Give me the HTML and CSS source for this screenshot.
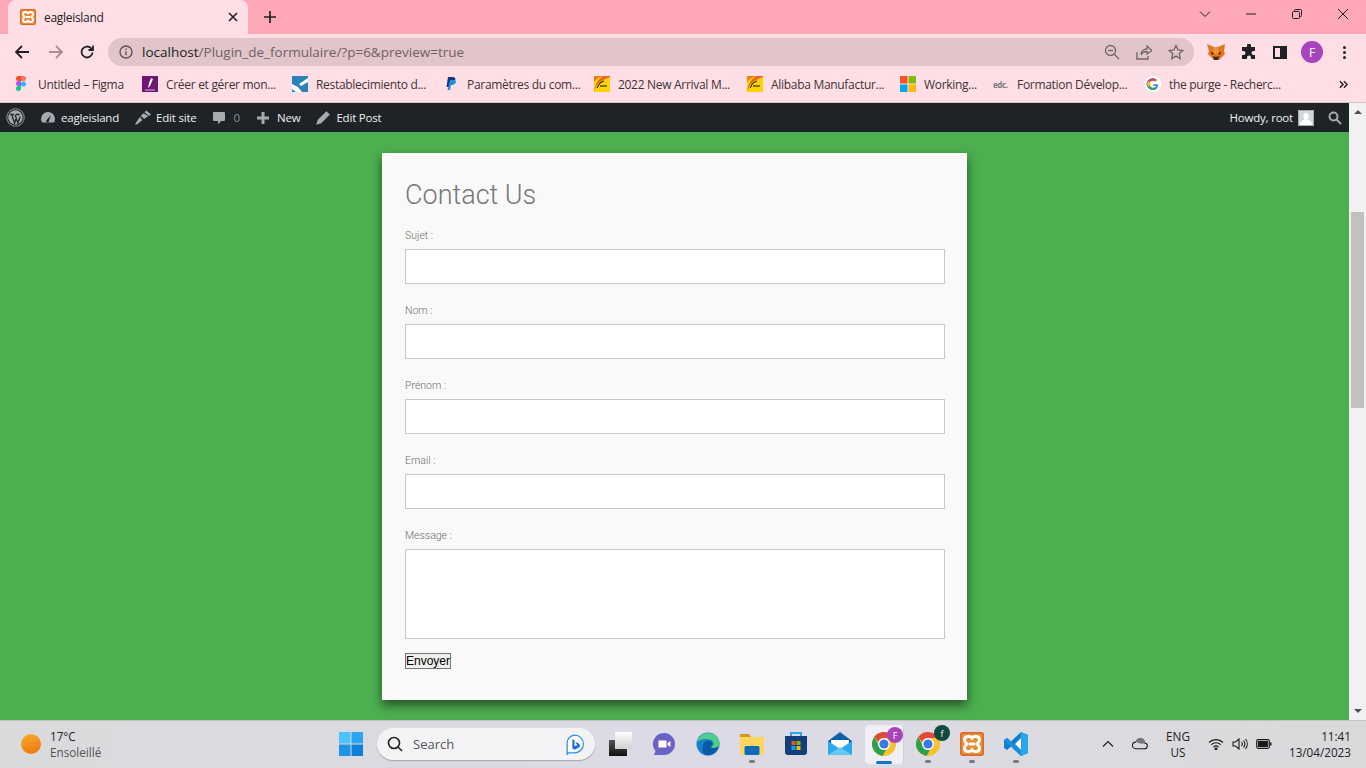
FILE: index.html
```html
<!DOCTYPE html>
<html lang="fr">

<head>
    <meta charset="UTF-8">
    <title>eagleisland</title>
    <link rel="stylesheet" href="styles.css">
</head>

<body>
    <svg class="defs" width="0" height="0">
        <symbol id="xampp" viewBox="0 0 24 24">
            <rect width="24" height="24" rx="3" fill="#d9691e" />
            <rect x="1.500" y="1.500" width="21" height="21" rx="2" fill="#ee8a35" />
            <path d="M4.500 8c0-4.500 5.500-4.500 7.500-1.800C14 3.500 19.500 3.500 19.500 8c0 2-1.500 3-2.500 4 1 1 2.500 2 2.500 4 0 4.500-5.500 4.500-7.500 1.800C10 20.500 4.500 20.500 4.500 16c0-2 1.500-3 2.500-4C6 11 4.500 10 4.500 8z" fill="none" stroke="#fff" stroke-width="3" />
            <path d="M9 12h6" stroke="#fff" stroke-width="3" />
        </symbol>
        <symbol id="chrome" viewBox="0 0 24 24">
            <circle cx="12" cy="12" r="12" fill="#fbc02d" />
            <path d="M12 0a12 12 0 0 1 10.400 6H12a6 6 0 0 0-5.700 4L2.300 4.900A12 12 0 0 1 12 0z" fill="#dc4b3e" />
            <path d="M2.300 4.900l4.900 9.500a6 6 0 0 0 6.900 3.200L10.600 23.900A12 12 0 0 1 2.300 4.900z" fill="#2e9e4f" />
            <circle cx="12" cy="12" r="6" fill="#fff" />
            <circle cx="12" cy="12" r="4.600" fill="#3b78e7" />
        </symbol>
        <symbol id="bolt" viewBox="0 0 16 16">
            <rect width="16" height="16" fill="#fdd400" />
            <path d="M0 16V6C3 2 7 0 12 0H0z" fill="#f07a1c" />
            <path d="M0 16C2 9 6 4 16 1V0H10C5 2 1 8 0 16z" fill="#e9632a" />
            <path d="M3 12l3-5 4-2M6 10h7" stroke="#111" stroke-width="1" fill="none" />
        </symbol>
        <linearGradient id="tv-light" x1="0" y1="0" x2="0" y2="1">
            <stop offset="0" stop-color="#fff" />
            <stop offset="1" stop-color="#cfcfcf" />
        </linearGradient>
        <linearGradient id="tv-dark" x1="0" y1="0" x2="0" y2="1">
            <stop offset="0" stop-color="#555" />
            <stop offset="1" stop-color="#111" />
        </linearGradient>
    </svg>

    <div class="screen">
        <header class="tabstrip">
            <div class="tab">
                <svg class="fav" viewBox="0 0 24 24"><use href="#xampp" /></svg>
                <span class="tab-title">eagleisland</span>
                <svg class="tab-close" viewBox="0 0 10 10"><path d="M1 1l8 8M9 1l-8 8" /></svg>
            </div>
            <svg class="new-tab" viewBox="0 0 12 12"><path d="M6 0v12M0 6h12" /></svg>
            <div class="win-controls">
                <span class="win-btn"><svg viewBox="0 0 12 12"><path d="M1 3.500l5 5 5-5" /></svg></span>
                <span class="win-btn"><svg viewBox="0 0 12 12"><path d="M1 6h10" /></svg></span>
                <span class="win-btn"><svg viewBox="0 0 12 12"><path d="M1.500 4.500a1 1 0 0 1 1-1h5a1 1 0 0 1 1 1v5a1 1 0 0 1-1 1h-5a1 1 0 0 1-1-1zM3.500 3.500v-1a1 1 0 0 1 1-1h5a1 1 0 0 1 1 1v5a1 1 0 0 1-1 1h-1" /></svg></span>
                <span class="win-btn"><svg viewBox="0 0 12 12"><path d="M1 1l10 10M11 1L1 11" /></svg></span>
            </div>
        </header>

        <div class="toolbar">
            <svg class="nav-icon" viewBox="0 0 16 16"><path d="M15 8H2M8 2L2 8l6 6" /></svg>
            <svg class="nav-icon nav-off" viewBox="0 0 16 16"><path d="M1 8h13M8 2l6 6-6 6" /></svg>
            <svg class="nav-icon" viewBox="0 0 16 16"><path d="M13.500 8.500a5.500 5.500 0 1 1-1.500-4.300L14 6M14 1.500V6H9.500" /></svg>
            <div class="omnibox">
                <svg class="info" viewBox="0 0 14 14"><circle cx="7" cy="7" r="6" /><path d="M7 6.200v4M7 3.500v1.400" /></svg>
                <span class="url"><b>localhost</b>/Plugin_de_formulaire/?p=6&amp;preview=true</span>
                <svg class="omni-icon" viewBox="0 0 16 16"><circle cx="6.500" cy="6.500" r="5" /><path d="M10.500 10.500L15 15M4 6.500h5" /></svg>
                <svg class="omni-icon" viewBox="0 0 16 16"><path d="M1 8v7h11v-3M5 11c0-4 3-6 6-6V2l5 4.500L11 10V7.500c-3 0-5 1-6 3.500z" /></svg>
                <svg class="omni-icon" viewBox="0 0 16 16"><path d="M8 1.500l2 4.500 4.800.5-3.600 3.200 1 4.800L8 12.100l-4.200 2.400 1-4.800L1.200 6.500 6 6z" /></svg>
            </div>
            <div class="extensions">
                <svg viewBox="0 0 18 18" class="ext"><path d="M0 1l7 3h4l7-3-1 7 1 3-3 3-3 3H7l-3-3-3-3 1-3z" fill="#e2761b" /><path d="M7 17l-1-4 3 1 3-1-1 4z" fill="#3d2a1c" /><path d="M4 9l3 1-2 2zM14 9l-3 1 2 2z" fill="#28201a" /><path d="M7 4h4l1 5-3 3-3-3z" fill="#f0913e" /></svg>
                <svg viewBox="0 0 16 16" class="ext"><path d="M6 1.500a2 2 0 0 1 4 0V3h4v4h-1.500a2 2 0 0 0 0 4H14v4h-4v-1.500a2 2 0 0 0-4 0V15H1v-4h1.500a2 2 0 0 0 0-4H1V3h5z" fill="#202124" /></svg>
                <span class="panel-icon"></span>
                <span class="avatar">F</span>
                <span class="kebab"><i></i><i></i><i></i></span>
            </div>
        </div>

        <nav class="bookmarks">
            <a class="bm">
                <svg viewBox="0 0 10 16"><path d="M2.500 0H5v5H2.500a2.500 2.500 0 0 1 0-5z" fill="#f24e1e" /><path d="M5 0h2.500a2.500 2.500 0 0 1 0 5H5z" fill="#ff7262" /><path d="M2.500 5H5v5H2.500a2.500 2.500 0 0 1 0-5z" fill="#a259ff" /><circle cx="7.500" cy="8" r="2.500" fill="#1abcfe" /><path d="M2.500 10H5v2.500A2.500 2.500 0 1 1 2.500 10z" fill="#0acf83" /></svg>
                Untitled – Figma
            </a>
            <a class="bm">
                <svg viewBox="0 0 16 16"><rect width="16" height="16" fill="#6d1773" /><path d="M9 2l2 1-3 7-2 2 1-5z" fill="#fff" /><path d="M3 14h10" stroke="#d9b7db" /></svg>
                Créer et gérer mon...
            </a>
            <a class="bm">
                <svg viewBox="0 0 16 16"><rect width="16" height="16" fill="#2a83b5" /><path d="M0 8l6 3 4 5H4L0 13zM16 2L7 8l2 2 7-4z" fill="#fff" /></svg>
                Restablecimiento d...
            </a>
            <a class="bm">
                <svg viewBox="0 0 16 16"><path d="M5 1h5c3 0 3.500 4-.500 5.500H7L6 11H3.500z" fill="#14347f" /><path d="M7 4h5c2 1 .500 5-3 5H8l-1 5H4.500z" fill="#1f8fd8" /></svg>
                Paramètres du com...
            </a>
            <a class="bm"><svg viewBox="0 0 16 16"><use href="#bolt" /></svg>2022 New Arrival M...</a>
            <a class="bm"><svg viewBox="0 0 16 16"><use href="#bolt" /></svg>Alibaba Manufactur...</a>
            <a class="bm">
                <svg viewBox="0 0 16 16"><rect width="7.500" height="7.500" fill="#f35325" /><rect x="8.500" width="7.500" height="7.500" fill="#81bc06" /><rect y="8.500" width="7.500" height="7.500" fill="#05a6f0" /><rect x="8.500" y="8.500" width="7.500" height="7.500" fill="#ffba08" /></svg>
                Working...
            </a>
            <a class="bm"><span class="edc">edc.</span>Formation Dévelop...</a>
            <a class="bm">
                <svg viewBox="0 0 16 16"><circle cx="8" cy="8" r="8" fill="#fff" /><path d="M13 8.200H8.300v1.900h2.700c-.400 1.300-1.500 2-3 2a3.900 3.900 0 0 1 0-7.800c1 0 1.800.3 2.500 1l1.400-1.400A6 6 0 1 0 8 14c3.500 0 5.300-2.500 5-5.800z" fill="#4285f4" /><path d="M3 5l2 1.500A3.900 3.900 0 0 1 10.500 5.300l1.400-1.400A6 6 0 0 0 3 5z" fill="#ea4335" /><path d="M3 11l2-1.500a3.900 3.900 0 0 0 .100-3L3 5a6 6 0 0 0 0 6z" fill="#fbbc05" /><path d="M3 11a6 6 0 0 0 8.500 1.800L9.800 11.500A3.900 3.900 0 0 1 5 9.500z" fill="#34a853" /></svg>
                the purge - Recherc...
            </a>
            <svg class="bm-more" viewBox="0 0 10 10"><path d="M1 1.500L4.500 5 1 8.500M5.500 1.500L9 5 5.500 8.500" /></svg>
        </nav>

        <div class="viewport">
            <div class="viewport-main">
                <div class="adminbar">
                    <svg class="ab-logo" viewBox="0 0 20 20"><circle class="ab-ring" cx="10" cy="10" r="9.200" /><circle cx="10" cy="10" r="7.600" /><path class="ab-cut" d="M4.500 6.800h3.800M10.500 6.800h3.800M6 7l3 9 2-6M9.500 7l3 9 2.500-7" /></svg>
                    <span class="ab-item ab-site">
                        <svg viewBox="0 0 16 16"><path d="M8 2a7 7 0 0 0-6 10.500h12A7 7 0 0 0 8 2zm-.8 7.500L11 5l-2 5.500a1.400 1.400 0 1 1-1.800-1z" fill-rule="evenodd" /></svg>
                        eagleisland
                    </span>
                    <span class="ab-item ab-edit">
                        <svg viewBox="0 0 18 16"><path d="M1 15l5-8 3 3-6 5zM7 6l3-3 5 3-4 3zM11 2l2-2 5 4-2 2z" /></svg>
                        Edit site
                    </span>
                    <span class="ab-item ab-comments">
                        <svg viewBox="0 0 14 14"><path d="M2 1h10a1 1 0 0 1 1 1v7a1 1 0 0 1-1 1H9l-3 3.500V10H2a1 1 0 0 1-1-1V2a1 1 0 0 1 1-1z" /></svg>
                        <span class="ab-count">0</span>
                    </span>
                    <span class="ab-item ab-new">
                        <svg viewBox="0 0 14 14"><path d="M5.500 1h3v4.500H13v3H8.500V13h-3V8.500H1v-3h4.500z" /></svg>
                        New
                    </span>
                    <span class="ab-item">
                        <svg viewBox="0 0 14 14"><path d="M10 1l3 3-7.500 7.500L1 13l1.500-4.500zM9 4l1 1" /></svg>
                        Edit Post
                    </span>
                    <span class="ab-right">
                        Howdy, root
                        <svg class="ab-avatar" viewBox="0 0 16 16"><rect width="16" height="16" fill="#a7aaad" /><rect x="1" y="1" width="14" height="14" fill="#d5d6d8" /><path d="M8 3a2.700 2.700 0 0 1 2.500 3.500C10.300 8 9.800 9 9.500 9.600 11 10.500 14 11 14 15H2c0-4 3-4.500 4.500-5.400C6.200 9 5.700 8 5.500 6.500A2.700 2.700 0 0 1 8 3z" fill="#fff" /></svg>
                        <svg class="ab-search" viewBox="0 0 14 14"><circle cx="5.500" cy="5.500" r="4" /><path d="M8.500 8.500L13 13" /></svg>
                    </span>
                </div>
                <main class="page">
                    <form class="card">
                        <h1>Contact Us</h1>
                        <label>Sujet :</label>
                        <input type="text">
                        <label>Nom :</label>
                        <input type="text">
                        <label>Prénom :</label>
                        <input type="text">
                        <label>Email :</label>
                        <input type="email">
                        <label>Message :</label>
                        <textarea></textarea>
                        <button type="button">Envoyer</button>
                    </form>
                </main>
            </div>
            <div class="scrollbar">
                <span class="arrow-up"></span>
                <span class="thumb"></span>
                <span class="arrow-down"></span>
            </div>
        </div>

        <footer class="taskbar">
            <div class="weather">
                <span class="sun"></span>
                <div class="weather-text">
                    <span class="temp">17°C</span>
                    <span class="cond">Ensoleillé</span>
                </div>
            </div>
            <div class="task-center">
                <svg class="win-logo" viewBox="0 0 24 24"><rect width="11.500" height="11.500" fill="#4cc2ff" /><rect x="12.500" width="11.500" height="11.500" fill="#2aa5f0" /><rect y="12.500" width="11.500" height="11.500" fill="#1a95e8" /><rect x="12.500" y="12.500" width="11.500" height="11.500" fill="#0f7fd8" /></svg>
                <div class="searchbox">
                    <svg class="search-glass" viewBox="0 0 16 16"><circle cx="7" cy="7" r="5.500" /><path d="M11 11l4 4" /></svg>
                    <span class="search-text">Search</span>
                    <svg class="bing" viewBox="0 0 20 20"><path d="M10 1a8.500 8.500 0 0 1 0 17H4l-1 1.500V10a8 8 0 0 1 7-9z" fill="#fff" stroke="#2f8fe8" stroke-width="1.200" /><path d="M8 5l2 .7v6l3-1.500-1.500-.8-.7-1.900L15 9.500v2.800L10 15l-2-1.200z" fill="#1b6fd8" /></svg>
                </div>
                <div class="apps">
                    <span class="app">
                        <svg viewBox="0 0 24 24"><rect x="1" y="8" width="18" height="16" fill="url(#tv-dark)" /><rect x="7" y="0" width="17" height="17" fill="url(#tv-light)" /></svg>
                    </span>
                    <span class="app">
                        <svg viewBox="0 0 24 24"><path d="M12 1a11 11 0 0 1 0 22H2l1.500-4A11 11 0 0 1 12 1z" fill="#6b62c8" /><path d="M6.500 8.500h8v7h-8zM15.500 11l3-2v6l-3-2z" fill="#fff" /></svg>
                    </span>
                    <span class="app">
                        <svg viewBox="0 0 24 24"><circle cx="12" cy="12" r="11.500" fill="#1583c9" /><path d="M1 10C3 2 13-2 20 4c3 3 4 6 3.500 10-1 2-6 3-8.500 1 3-1 4-5 0-7-5-2-11-1-14 2z" fill="#4fd08a" /><path d="M7 14c0-4 4-6 8-5 2 1 2 5-1 6 2 2 6 1 9-1-2 6-8 10-13 9-4-2-4-7-3-9z" fill="#0c59a4" /></svg>
                    </span>
                    <span class="app">
                        <svg viewBox="0 0 24 24"><path d="M0 2h9l2 3h13v7H0z" fill="#d69b16" /><rect y="5" width="24" height="18" fill="#ffd75e" /><rect x="4.500" y="14" width="15" height="9" rx="1.500" fill="#0f6cbd" /></svg>
                        <i class="dot"></i>
                    </span>
                    <span class="app">
                        <svg viewBox="0 0 24 24"><path d="M7 5V1h10v4" fill="none" stroke="#2fa4e7" stroke-width="2" /><path d="M1 4h22v16a3 3 0 0 1-3 3H4a3 3 0 0 1-3-3z" fill="#123f7a" /><rect x="7.500" y="9" width="4" height="4" fill="#f25022" /><rect x="12.500" y="9" width="4" height="4" fill="#7fba00" /><rect x="7.500" y="14" width="4" height="4" fill="#00a4ef" /><rect x="12.500" y="14" width="4" height="4" fill="#ffb900" /></svg>
                    </span>
                    <span class="app">
                        <svg viewBox="0 0 24 24"><path d="M0 9L12 0l12 9v14H0z" fill="#0f5fa8" /><path d="M3 8h18v7l-9 4-9-4z" fill="#fff" /><path d="M0 9l12 8 12-8v14H0z" fill="#2aa9ec" /><path d="M0 23l12-8 12 8z" fill="#66c7f4" /></svg>
                    </span>
                    <span class="app app-active">
                        <svg viewBox="0 0 24 24"><use href="#chrome" /></svg>
                        <span class="badge badge-f">F</span>
                        <i class="dash"></i>
                    </span>
                    <span class="app">
                        <svg viewBox="0 0 24 24"><use href="#chrome" /></svg>
                        <span class="badge badge-g">f</span>
                        <i class="dot"></i>
                    </span>
                    <span class="app">
                        <svg viewBox="0 0 24 24"><use href="#xampp" /></svg>
                        <i class="dot"></i>
                    </span>
                    <span class="app">
                        <svg viewBox="0 0 24 24"><path d="M17 0l7 3v18l-7 3L7 14.500 3 18l-3-2v-8l3-2 4 3.500z" fill="#0f7fcb" /><path d="M17 6l-6 6 6 6z" fill="#fff" /><path d="M0 8l3-2 14 12v6z" fill="#1a93dd" opacity=".8" /><path d="M17 0l7 3v18l-7 3z" fill="#29a7ee" /></svg>
                        <i class="dot"></i>
                    </span>
                </div>
            </div>
            <div class="tray">
                <svg class="tray-chevron" viewBox="0 0 12 8"><path d="M1 6.500l5-5 5 5" /></svg>
                <svg class="tray-cloud" viewBox="0 0 18 12"><path d="M5 11h9a3 3 0 0 0 .500-6A5 5 0 0 0 5 4a3.500 3.500 0 0 0 0 7z" /><path class="cloud-fill" d="M2 6c2-3 4-2 6-1s5 1 7 0a5 5 0 0 0-10-1 3.500 3.500 0 0 0-3 2z" /></svg>
                <div class="lang"><span>ENG</span><span>US</span></div>
                <svg class="tray-wifi" viewBox="0 0 16 12"><path d="M1 4.500a10 10 0 0 1 14 0M3.200 6.700a7 7 0 0 1 9.600 0M5.500 9a3.700 3.700 0 0 1 5 0" /><circle cx="8" cy="10.700" r="1" /></svg>
                <svg class="tray-vol" viewBox="0 0 16 12"><path d="M1 4v4h2.500L7 11V1L3.500 4zM9.500 4a3 3 0 0 1 0 4M11.500 2.500a5.500 5.500 0 0 1 0 7M13.500 1a8 8 0 0 1 0 10" /></svg>
                <svg class="tray-batt" viewBox="0 0 16 10"><rect x=".7" y=".7" width="12.600" height="8.600" rx="1.500" fill="none" stroke="#1a1a1a" stroke-width="1.200" /><rect x="2" y="2" width="10" height="6" fill="#1a1a1a" /><rect x="14" y="3.500" width="1.500" height="3" fill="#1a1a1a" /></svg>
                <div class="clock"><span>11:41</span><span>13/04/2023</span></div>
            </div>
        </footer>
    </div>
</body>

</html>
```
FILE: styles.css
```css
* {
    box-sizing: border-box;
}

html,
body {
    margin: 0;
    height: 100%;
    overflow: hidden;
}

body {
    font-family: "Open Sans", "Noto Sans", Arial, sans-serif;
    color: #202124;
}

.defs {
    display: block;
    height: 0;
}

.screen {
    width: 1366px;
    height: 768px;
    display: flex;
    flex-direction: column;
}

/* browser chrome */
.tabstrip {
    height: 34px;
    background: #ffa9b8;
    display: flex;
    align-items: flex-end;
    padding-left: 8px;
}

.tab {
    width: 240px;
    height: 34px;
    background: #ffdfe5;
    border-radius: 8px 8px 0 0;
    display: flex;
    align-items: center;
    padding: 0 10px 0 12px;
    font-size: 12px;
}

.fav {
    width: 16px;
    height: 16px;
}

.tab-title {
    flex: 1;
    margin-left: 8px;
    letter-spacing: -0.3px;
}

.tab-close {
    width: 10px;
    height: 10px;
    stroke: #202124;
    stroke-width: 1.6;
}

.new-tab {
    width: 12px;
    height: 12px;
    margin: 0 0 11px 16px;
    stroke: #202124;
    stroke-width: 1.7;
}

.win-controls {
    margin-left: auto;
    display: flex;
    align-self: flex-start;
}

.win-btn {
    width: 46px;
    height: 28px;
    display: flex;
    align-items: center;
    justify-content: center;
}

.win-btn svg {
    width: 12px;
    height: 12px;
    fill: none;
    stroke: #202124;
    stroke-width: 1;
}

.toolbar {
    height: 33px;
    background: #ffdfe5;
    display: flex;
    align-items: center;
    padding: 3px 0 0 14px;
}

.nav-icon {
    width: 16px;
    height: 16px;
    margin-right: 18px;
    fill: none;
    stroke: #202124;
    stroke-width: 1.8;
}

.nav-off {
    stroke: #a58f93;
    margin-right: 15px;
}

.omnibox {
    width: 1086px;
    height: 28px;
    margin-left: -5px;
    background: #e1c5c9;
    border-radius: 14px;
    display: flex;
    align-items: center;
    padding-left: 11px;
    padding-right: 10px;
}

.info {
    width: 14px;
    height: 14px;
    fill: none;
    stroke: #5f5557;
    stroke-width: 1.4;
}

.url {
    flex: 1;
    margin-left: 9px;
    font-size: 13.500px;
    color: #6d6265;
}

.url b {
    font-weight: 400;
    color: #202124;
}

.omni-icon {
    width: 16px;
    height: 16px;
    margin-left: 16px;
    fill: none;
    stroke: #6f6568;
    stroke-width: 1.3;
}

.extensions {
    display: flex;
    align-items: center;
    margin-left: 13px;
    gap: 16px;
}

.ext {
    width: 16px;
    height: 16px;
}

.extensions svg:first-child {
    width: 18px;
    height: 18px;
}

.panel-icon {
    width: 14px;
    height: 13px;
    border: 2px solid #202124;
    background: linear-gradient(90deg, #ffdfe5 50%, #202124 50%);
}

.avatar {
    width: 22px;
    height: 22px;
    margin-left: -2px;
    border-radius: 50%;
    background: #a845ba;
    color: #fff;
    font-size: 12px;
    display: flex;
    align-items: center;
    justify-content: center;
}

.kebab {
    display: flex;
    flex-direction: column;
    gap: 2px;
    margin-left: 4px;
}

.kebab i {
    width: 3px;
    height: 3px;
    border-radius: 50%;
    background: #202124;
}

.bookmarks {
    height: 36px;
    background: #ffdfe5;
    border-bottom: 1px solid #d9c0c6;
    display: grid;
    grid-template-columns: 126px 150px 151px 151px 153px 153px 93px 152px 194px 16px;
    align-items: center;
    padding: 0 0 1px 16px;
    font-size: 12px;
    letter-spacing: -0.3px;
}

.bm {
    display: flex;
    align-items: center;
    gap: 8px;
    white-space: nowrap;
    color: #3c3436;
}

.bm svg {
    width: 16px;
    height: 16px;
    flex: none;
}

.bm:first-child svg {
    width: 10px;
    margin-right: 4px;
}

.edc {
    width: 16px;
    font-size: 8px;
    font-weight: 700;
    letter-spacing: -0.4px;
    color: #777;
}

.bm-more {
    width: 9px;
    height: 9px;
    fill: none;
    stroke: #202124;
    stroke-width: 1.600;
}

/* page and its scrollbar */
.viewport {
    flex: 1;
    min-height: 0;
    display: flex;
    border-bottom: 1px solid #c4c4c4;
}

.viewport-main {
    flex: 1;
    display: flex;
    flex-direction: column;
}

/* wp admin bar */
.adminbar {
    height: 29px;
    background: #1d2327;
    color: #f0f0f1;
    display: flex;
    align-items: center;
    padding: 0 7px 0 6px;
    font-size: 11.500px;
    letter-spacing: -0.2px;
}

.ab-logo {
    width: 19px;
    height: 19px;
    margin-right: 15px;
    fill: #a7aaad;
}

.ab-ring {
    fill: none;
    stroke: #a7aaad;
    stroke-width: 0.900;
}

.ab-cut {
    fill: none;
    stroke: #1d2327;
    stroke-width: 1.400;
}

.ab-item {
    display: flex;
    align-items: center;
    gap: 5px;
    margin-right: 15px;
}

.ab-item svg {
    width: 16px;
    height: 16px;
    fill: #a7aaad;
}

.ab-edit svg {
    width: 17px;
}

.ab-comments svg {
    width: 14px;
    height: 14px;
}

.ab-comments {
    gap: 8px;
    margin-right: 16px;
}

.ab-count {
    color: #8c8f94;
}

.ab-new svg {
    width: 14px;
    height: 14px;
}

.ab-new {
    gap: 7px;
}

.ab-right {
    margin-left: auto;
    display: flex;
    align-items: center;
    gap: 5px;
}

.ab-avatar {
    width: 16px;
    height: 16px;
}

.ab-search {
    width: 14px;
    height: 14px;
    margin-left: 9px;
    fill: none;
    stroke: #a7aaad;
    stroke-width: 2;
}

.page {
    flex: 1;
    background: #4caf50;
    padding-top: 21px;
    display: flex;
    justify-content: center;
    align-items: flex-start;
}

.card {
    width: 585px;
    height: 547px;
    background: #f9f9f9;
    padding: 24px 22px 0 23px;
    box-shadow: 0 5px 10px rgba(0, 0, 0, 0.55);
    font-family: Roboto, Arial, sans-serif;
    font-weight: 300;
    display: flex;
    flex-direction: column;
}

.card h1 {
    margin: 0 0 15px;
    height: 37px;
    font-size: 27px;
    line-height: 37px;
    font-weight: 300;
    color: #777;
}

.card label {
    height: 13px;
    margin-bottom: 7px;
    font-size: 10.500px;
    line-height: 13px;
    color: #6f6f6f;
}

.card input,
.card textarea {
    width: 540px;
    height: 35px;
    margin: 0 0 20px;
    padding: 0;
    border: 1px solid #c8c8c8;
    background: #fff;
    display: block;
    flex: none;
}

.card textarea {
    height: 90px;
    margin-bottom: 14px;
    resize: none;
}

.card button {
    width: 46px;
    height: 16px;
    padding: 0;
    border: 1px solid #767676;
    background: #efefef;
    font-family: "Liberation Sans", Arial, sans-serif;
    font-size: 12px;
    line-height: 14px;
    color: #000;
}

.scrollbar {
    width: 17px;
    background: #f1f1f1;
    display: flex;
    flex-direction: column;
    align-items: center;
}

.arrow-up,
.arrow-down {
    width: 0;
    height: 0;
    border-left: 4px solid transparent;
    border-right: 4px solid transparent;
}

.arrow-up {
    margin-top: 7px;
    border-bottom: 4px solid #505050;
}

.thumb {
    width: 13px;
    height: 196px;
    margin-top: 98px;
    background: #c1c1c1;
}

.arrow-down {
    margin-top: auto;
    margin-bottom: 7px;
    border-top: 4px solid #505050;
}

/* windows taskbar */
.taskbar {
    height: 47px;
    padding-bottom: 1px;
    background: linear-gradient(90deg, #dadadc, #dcdae6 50%, #dcdae2 70%, #d9d9da);
    display: flex;
    align-items: center;
}

.weather {
    width: 339px;
    display: flex;
    align-items: center;
    padding-left: 21px;
    gap: 9px;
}

.sun {
    width: 20px;
    height: 20px;
    border-radius: 50%;
    background: linear-gradient(160deg, #f2b12e, #f2700f);
}

.weather-text {
    display: flex;
    flex-direction: column;
    font-size: 11.700px;
    line-height: 16px;
    color: #222;
}

.cond {
    color: #555;
}

.task-center {
    display: flex;
    align-items: center;
}

.win-logo {
    width: 24px;
    height: 24px;
}

.searchbox {
    width: 218px;
    height: 32px;
    margin-left: 14px;
    background: #f3f3f6;
    border-radius: 16px;
    box-shadow: 0 1px 1px rgba(0, 0, 0, 0.25);
    display: flex;
    align-items: center;
    padding: 0 10px 0 10px;
}

.search-glass {
    width: 16px;
    height: 16px;
    fill: none;
    stroke: #222;
    stroke-width: 1.600;
}

.search-text {
    flex: 1;
    margin-left: 10px;
    font-size: 13px;
    color: #555;
}

.bing {
    width: 21px;
    height: 21px;
}

.apps {
    display: flex;
    margin-left: 3px;
}

.app {
    width: 44px;
    height: 46px;
    display: flex;
    align-items: center;
    justify-content: center;
    position: relative;
}

.app > svg {
    width: 24px;
    height: 24px;
}

.app-active::before {
    content: "";
    position: absolute;
    left: 3px;
    top: 4px;
    width: 38px;
    height: 39px;
    background: #f0eff5;
    border-radius: 4px;
    box-shadow: 2px 0 0 -1px #cfcfd6;
}

.app-active > svg {
    position: relative;
}

.badge {
    position: absolute;
    right: 0;
    top: 6px;
    width: 16px;
    height: 16px;
    border-radius: 50%;
    font-size: 9px;
    color: #fff;
    display: flex;
    align-items: center;
    justify-content: center;
}

.badge-f {
    right: 3px;
    background: #a845ba;
}

.badge-g {
    background: #0f4a3c;
    top: 4px;
}

.dot {
    position: absolute;
    bottom: 4px;
    left: 19px;
    width: 6px;
    height: 3px;
    border-radius: 2px;
    background: #7a7a7e;
}

.dash {
    position: absolute;
    bottom: 3px;
    left: 14px;
    width: 16px;
    height: 3px;
    border-radius: 2px;
    background: #0f74d0;
}

.tray {
    flex: 1;
    display: flex;
    align-items: center;
    padding-right: 15px;
}

.tray svg {
    fill: none;
    stroke: #1a1a1a;
    stroke-width: 1.100;
}

.tray-chevron {
    width: 12px;
    height: 8px;
    margin-left: 64px;
}

.tray-cloud {
    width: 17px;
    height: 12px;
    margin-left: 17px;
}

.cloud-fill {
    fill: #777;
    stroke: none;
}

.lang {
    width: 40px;
    margin-left: 10px;
    display: flex;
    flex-direction: column;
    align-items: center;
    font-size: 11.700px;
    line-height: 16px;
}

.tray-wifi {
    width: 16px;
    height: 12px;
    margin-left: 10px;
}

.tray-vol {
    width: 16px;
    height: 12px;
    margin-left: 8px;
}

.tray-batt {
    width: 16px;
    height: 10px;
    margin-left: 8px;
    stroke: none !important;
}

.clock {
    margin-left: auto;
    display: flex;
    flex-direction: column;
    align-items: flex-end;
    font-size: 11.700px;
    line-height: 16px;
}
```
